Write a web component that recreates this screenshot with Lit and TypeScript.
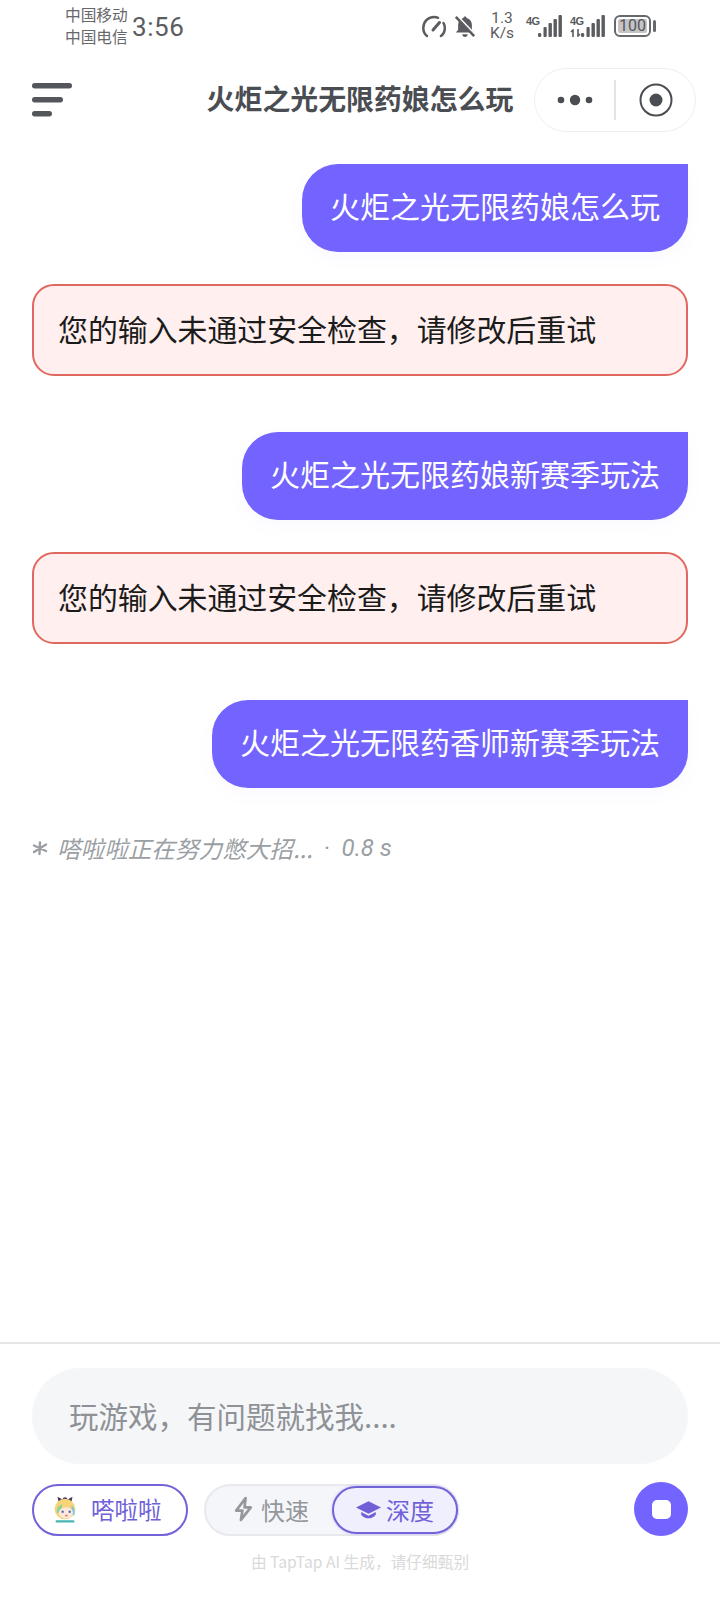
import { LitElement, html, css, svg } from "lit";
import { customElement } from "lit/decorators.js";

const bars = svg`<rect x="0" y="18" width="3.200" height="4" rx="1.200"/><rect x="5.500" y="12" width="3.200" height="10" rx="1"/><rect x="10.500" y="8" width="3.400" height="14" rx="1"/><rect x="15.500" y="4" width="3.400" height="18" rx="1"/><rect x="20.500" y="0" width="3.400" height="22" rx="1"/>`;

@customElement("app-root")
export class AppRoot extends LitElement {
  static styles = css`
    :host {
      display: flex;
      flex-direction: column;
      height: 1600px;
      width: 720px;
      background: #fff;
      font-family: "Noto Sans CJK SC", "Noto Sans", sans-serif;
      overflow: hidden;
    }
    .status {
      display: flex;
      align-items: center;
      height: 52px;
      margin-bottom: 8px;
      padding: 0 64px 0 65px;
      color: #5a5c60;
      flex: none;
    }
    .carrier {
      font-size: 15.7px;
      line-height: 22px;
      width: 67px;
      flex: none;
      color: #66686c;
    }
    .time {
      font-family: Roboto, sans-serif;
      font-size: 26px;
      line-height: 30px;
      letter-spacing: 0.6px;
      margin-top: 2px;
    }
    .sicons {
      margin-left: auto;
      display: flex;
      align-items: center;
    }
    .sicons svg { display: block; flex: none; }
    .speed { margin-right: 8px; }
    .bell { margin-right: 13px; }
    .net {
      font-family: Roboto, sans-serif;
      font-size: 15.5px;
      line-height: 15px;
      text-align: center;
      width: 26px;
      margin-right: 11px;
    }
    .sig {
      display: flex;
      align-items: flex-start;
      position: relative;
      height: 24px;
    }
    .sig b {
      font-family: "Liberation Sans", sans-serif;
      font-size: 11px;
      line-height: 12px;
      font-weight: 700;
      width: 12px;
      flex: none;
      letter-spacing: -0.6px;
      margin-top: 1px;
    }
    .sig svg { position: absolute; right: 0; top: 1px; }
    .sig .up { position: absolute; left: 0; top: 15px; }
    .sig.first { width: 36px; margin-right: 8px; }
    .sig.second { width: 35px; margin-right: 9px; }
    .battery {
      width: 37px;
      height: 22px;
      border: 2px solid #66686c;
      border-radius: 6px;
      box-sizing: border-box;
      padding: 2px;
      display: flex;
    }
    .battery span {
      flex: 1;
      background: #c4c4c6;
      border-radius: 2px;
      font-family: Roboto, sans-serif;
      font-size: 16px;
      line-height: 14px;
      text-align: center;
      color: #55575a;
    }
    .nub {
      width: 3px;
      height: 12px;
      background: #66686c;
      border-radius: 2px;
      margin-left: 2px;
    }
    .nav {
      display: grid;
      grid-template-columns: 1fr auto 1fr;
      align-items: center;
      height: 64px;
      margin-top: 8px;
      padding: 0 24px 0 32px;
      flex: none;
    }
    .title {
      font-size: 27.9px;
      font-weight: 700;
      color: #4a4d52;
      line-height: 40px;
      margin: -4px 0 0 -8px;
    }
    .menu { display: block; }
    .capsule {
      justify-self: end;
      width: 162px;
      height: 64px;
      box-sizing: border-box;
      border: 1px solid #efefef;
      border-radius: 32px;
      display: flex;
      align-items: center;
      background: #fff;
    }
    .capsule .cell {
      flex: 1;
      display: flex;
      justify-content: center;
      align-items: center;
    }
    .capsule .sep { width: 2px; height: 40px; background: #e4e4e4; flex: none; }
    .messages {
      flex: 1;
      display: flex;
      flex-direction: column;
      padding: 32px 32px 0;
      min-height: 0;
    }
    .user {
      align-self: flex-end;
      background: #7363ff;
      color: #fff;
      font-size: 30px;
      line-height: 40px;
      padding: 21px 28px 27px;
      border-radius: 36px 0 36px 36px;
      box-shadow: 0 6px 18px rgba(115, 99, 255, 0.04);
      white-space: nowrap;
    }
    .err {
      margin-top: 32px;
      margin-bottom: 56px;
      background: #ffefee;
      border: 2px solid #e0685e;
      border-radius: 22px;
      color: #1b1b1b;
      font-size: 29.9px;
      line-height: 40px;
      padding: 22px 24px 26px;
    }
    .thinking {
      margin-top: 42px;
      display: flex;
      align-items: center;
      color: #9b9fa4;
      font-size: 23.6px;
      line-height: 36px;
      font-style: italic;
      white-space: pre;
    }
    .thinking .star {
      flex: none;
      display: block;
      margin-right: 9px;
    }
    .thinking .dot {
      font-family: Roboto, sans-serif;
      margin: 0 12px 0 11px;
    }
    .thinking .dur {
      font-family: Roboto, sans-serif;
      font-size: 24px;
    }
    .footer {
      flex: none;
      border-top: 2px solid #e6e6e7;
      padding: 24px 32px 0;
      height: 258px;
      box-sizing: border-box;
      display: flex;
      flex-direction: column;
    }
    .input {
      height: 96px;
      box-sizing: border-box;
      background: #f5f6f8;
      border-radius: 48px;
      display: flex;
      align-items: center;
      padding: 0 37px 3px;
      color: #8e9196;
      font-size: 29.5px;
      flex: none;
    }
    .controls {
      display: flex;
      align-items: center;
      margin-top: 18px;
      height: 54px;
    }
    .role {
      width: 156px;
      height: 52px;
      margin-top: 2px;
      box-sizing: border-box;
      border: 2px solid #7263d8;
      border-radius: 26px;
      display: flex;
      align-items: center;
      padding: 0 0 2px 19px;
      gap: 14px;
      color: #6f60d8;
      font-size: 23.5px;
    }
    .seg {
      margin: 2px 0 0 16px;
      width: 255px;
      height: 52px;
      box-sizing: border-box;
      border: 2px solid #e8e9ee;
      border-radius: 26px;
      background: #f5f6fa;
      display: flex;
      align-items: center;
      justify-content: space-between;
      font-size: 24px;
    }
    .fast {
      display: flex;
      align-items: center;
      gap: 8px;
      color: #94979c;
      padding: 0 0 2px 28px;
    }
    .deep {
      width: 126px;
      height: 48px;
      box-sizing: border-box;
      border: 2px solid #7263d8;
      border-radius: 24px;
      background: #f0effe;
      display: flex;
      align-items: center;
      justify-content: center;
      gap: 5px;
      padding-bottom: 2px;
      color: #6f60d8;
      margin-right: -1px;
      box-shadow: 0 0 3px rgba(115, 99, 255, 0.35);
    }
    .stop {
      margin-left: auto;
      width: 54px;
      height: 54px;
      border-radius: 50%;
      background: #7363ff;
      display: flex;
      align-items: center;
      justify-content: center;
    }
    .stop i {
      display: block;
      width: 19px;
      height: 19px;
      border-radius: 5px;
      background: #fff;
    }
    .note {
      margin-top: 15px;
      text-align: center;
      font-size: 15.7px;
      line-height: 22px;
      color: #d9d9d9;
    }
  `;

  private user(t: string) {
    return html`<div class="user">${t}</div>`;
  }
  private err() {
    return html`<div class="err">您的输入未通过安全检查，请修改后重试</div>`;
  }

  render() {
    return html`
      <div class="status">
        <div class="carrier">中国移动<br />中国电信</div>
        <div class="time">3:56</div>
        <div class="sicons">
          <svg class="speed" width="24" height="23" viewBox="0 0 24 23" fill="none" stroke="#5a5c60" stroke-width="2.500" stroke-linecap="round">
            <path d="M5 21C2.400 19 1.300 16 1.300 13 1.300 6.800 6 2 12 2c1.500 0 2.900.3 4.100.8"/>
            <path d="M21.500 8c.8 1.500 1.300 3.200 1.300 5 0 3-1.200 6-3.800 8"/>
            <path d="M11 15 17.500 7.500" stroke-width="3"/>
          </svg>
          <svg class="bell" width="22" height="23" viewBox="0 0 24 25" fill="#5a5c60">
            <path d="M12 1.500c1 0 1.700.7 1.800 1.600 3.700.9 5.700 3.900 5.700 7.400v5.500l2.500 3H2l2.500-3v-5.500c0-3.500 2-6.500 5.700-7.400.1-.9.800-1.600 1.800-1.600z"/>
            <path d="M9 21h6c0 1.700-1.300 3-3 3s-3-1.300-3-3z"/>
            <path d="M3.500 1 23 21.500" stroke="#fff" stroke-width="2.500"/>
            <path d="M2 2 22 23" stroke="#5a5c60" stroke-width="2.800"/>
          </svg>
          <div class="net">1.3<br />K/s</div>
          <div class="sig first">
            <b>4G</b>
            <svg width="24" height="22" viewBox="0 0 24 22" fill="#5a5c60">${bars}</svg>
          </div>
          <div class="sig second">
            <b>4G</b>
            <svg class="up" width="12" height="8" viewBox="0 0 12 8" fill="none" stroke="#5a5c60" stroke-width="1.600">
              <path d="M3 8V1L1 3M8 0v7l2-2"/>
            </svg>
            <svg width="24" height="22" viewBox="0 0 24 22" fill="#5a5c60">${bars}</svg>
          </div>
          <div class="battery"><span>100</span></div>
          <div class="nub"></div>
        </div>
      </div>

      <div class="nav">
        <svg class="menu" width="40" height="34" viewBox="0 0 40 34" fill="#53565b">
          <rect x="0" y="0" width="40" height="5.500" rx="2.700"/>
          <rect x="0" y="14" width="31" height="5.500" rx="2.700"/>
          <rect x="0" y="28" width="20" height="5.500" rx="2.700"/>
        </svg>
        <div class="title">火炬之光无限药娘怎么玩</div>
        <div class="capsule">
          <div class="cell">
            <svg width="36" height="14" viewBox="0 0 36 14" fill="#4a4d52">
              <circle cx="4" cy="7" r="3.300"/><circle cx="18" cy="7" r="5.200"/><circle cx="32" cy="7" r="3.300"/>
            </svg>
          </div>
          <div class="sep"></div>
          <div class="cell">
            <svg width="34" height="34" viewBox="0 0 34 34">
              <circle cx="17" cy="17" r="15.500" fill="none" stroke="#4a4d52" stroke-width="2"/>
              <circle cx="17" cy="17" r="6.500" fill="#4a4d52"/>
            </svg>
          </div>
        </div>
      </div>

      <div class="messages">
        ${this.user("火炬之光无限药娘怎么玩")}
        ${this.err()}
        ${this.user("火炬之光无限药娘新赛季玩法")}
        ${this.err()}
        ${this.user("火炬之光无限药香师新赛季玩法")}
        <div class="thinking">
          <svg class="star" width="16" height="16" viewBox="0 0 16 16" fill="none" stroke="#9b9fa4" stroke-width="2.400" stroke-linecap="round">
            <path d="M8 2.500 7.500 14M2 5.500 14 11M14 4.500 2 12"/>
          </svg>
          <span>嗒啦啦正在努力憋大招...</span><span class="dot">·</span><span class="dur">0.8 s</span>
        </div>
      </div>

      <div class="footer">
        <div class="input">玩游戏，有问题就找我....</div>
        <div class="controls">
          <div class="role">
            <svg width="24" height="30" viewBox="0 0 24 32">
              <path d="M4 3 10 6 5 8zM20 3l-6 3 5 2z" fill="#4a3a5e"/>
              <ellipse cx="12" cy="5.500" rx="2.500" ry="2" fill="#4a3a5e"/>
              <circle cx="12" cy="16" r="11" fill="#f8d377"/>
              <path d="M3 20c0-6 3-8 6-9l-1 9z" fill="#8fd39a"/>
              <path d="M19 12c3 2 4 6 3 11l-3-1z" fill="#7cc9d6"/>
              <ellipse cx="13" cy="20" rx="7.500" ry="6" fill="#fde8dc"/>
              <circle cx="9.500" cy="19" r="1.300" fill="#5a6ab0"/><circle cx="17" cy="19" r="1.300" fill="#5a6ab0"/>
              <path d="M12 23h3" stroke="#e8776f" stroke-width="1.500"/>
              <rect x="2" y="28" width="20" height="2.500" rx="1" fill="#48b5b0"/>
            </svg>
            <span>嗒啦啦</span>
          </div>
          <div class="seg">
            <div class="fast">
              <svg width="19" height="26" viewBox="0 0 18 25" fill="none" stroke="#94979c" stroke-width="2.600" stroke-linejoin="round">
                <path d="M11 2 2 14h6l-1.500 9L16 11h-6z"/>
              </svg>
              <span>快速</span>
            </div>
            <div class="deep">
              <svg width="25" height="19" viewBox="0 0 24 18" fill="#6f60d8">
                <path d="M12 1 24 7l-12 6L0 7z"/>
                <path d="M5 11.500l7 3.500 7-3.500V14c-2 2.500-4.500 3.500-7 3.500S7 16.500 5 14z"/>
              </svg>
              <span>深度</span>
            </div>
          </div>
          <div class="stop"><i></i></div>
        </div>
        <div class="note">由 TapTap AI 生成，请仔细甄别</div>
      </div>
    `;
  }
}
